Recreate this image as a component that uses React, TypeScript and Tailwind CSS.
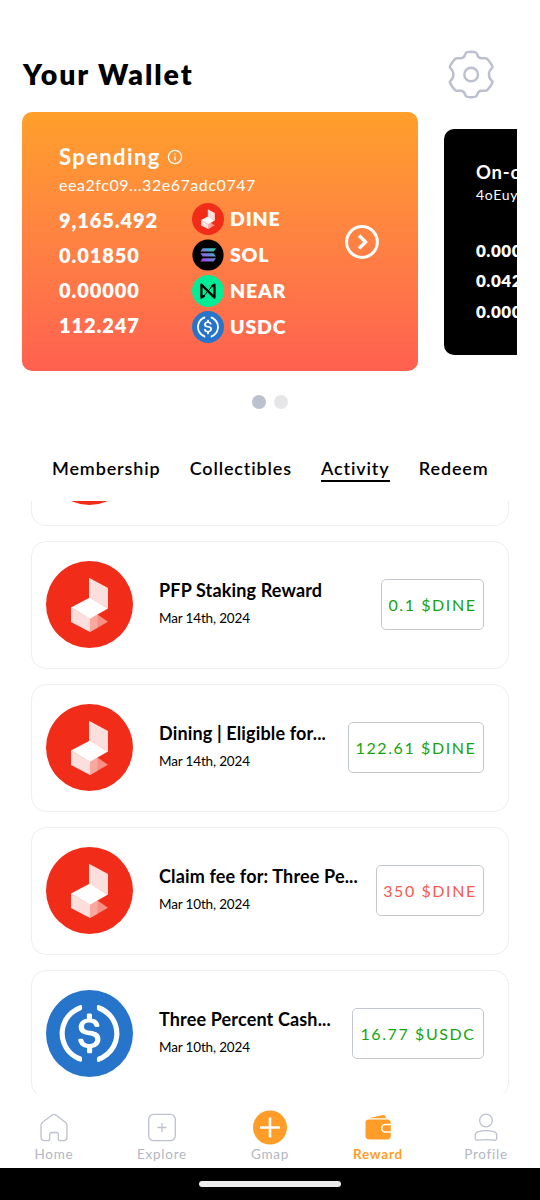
import type { ReactNode } from "react";

const DineIcon = ({ className }: { className: string }) => (
  <svg viewBox="0 0 87 87" className={className}>
    <circle cx="43.5" cy="43.5" r="43.5" fill="#f12d1a" />
    <path d="M43 16.7 62 27V47.5L43 37Z" fill="#fcdfdc" />
    <path d="M44 57.5 51.5 53.5 62 60.8 44 71Z" fill="#f88f85" />
    <path d="M44 57.5 51.5 53.5V66.8L44 71Z" fill="#f9a8a0" />
    <path d="M25 46.5 44 57.5V71L25 61Z" fill="#fcdfdc" />
    <path d="M25 46.5 43.5 36.7 62 47.5 44 57.8Z" fill="#fff" />
  </svg>
);

const UsdcIcon = ({ className }: { className: string }) => (
  <svg viewBox="0 0 32 32" className={className}>
    <circle cx="16" cy="16" r="16" fill="#2775ca" />
    <path
      fill="#fff"
      d="M20.022 18.124c0-2.124-1.28-2.852-3.84-3.156-1.828-.243-2.193-.728-2.193-1.578 0-.85.61-1.396 1.828-1.396 1.097 0 1.707.364 2.011 1.275a.458.458 0 00.427.303h.975a.416.416 0 00.427-.425v-.06a3.04 3.04 0 00-2.743-2.489V9.142c0-.243-.183-.425-.487-.486h-.915c-.243 0-.426.182-.487.486v1.396c-1.829.242-2.986 1.456-2.986 2.974 0 2.002 1.218 2.791 3.778 3.095 1.707.303 2.255.668 2.255 1.639 0 .97-.853 1.638-2.011 1.638-1.585 0-2.133-.667-2.316-1.578-.06-.242-.244-.364-.427-.364h-1.036a.416.416 0 00-.426.425v.06c.243 1.518 1.219 2.61 3.23 2.914v1.457c0 .242.183.425.487.485h.915c.243 0 .426-.182.487-.485V21.34c1.829-.303 3.047-1.578 3.047-3.217z"
    />
    <path
      fill="#fff"
      d="M12.892 24.497c-4.754-1.7-7.192-6.98-5.424-11.653.914-2.55 2.925-4.491 5.424-5.402.244-.121.365-.303.365-.607v-.85c0-.242-.121-.424-.365-.485-.061 0-.183 0-.244.06a10.895 10.895 0 00-7.13 13.717c1.096 3.4 3.717 6.01 7.13 7.102.244.121.488 0 .548-.243.061-.06.061-.122.061-.243v-.85c0-.182-.182-.424-.365-.546zm6.46-18.936c-.244-.122-.488 0-.548.242-.061.061-.061.122-.061.243v.85c0 .243.182.485.365.607 4.754 1.7 7.192 6.98 5.424 11.653-.914 2.55-2.925 4.491-5.424 5.402-.244.121-.365.303-.365.607v.85c0 .242.121.424.365.485.061 0 .183 0 .244-.06a10.895 10.895 0 007.13-13.717c-1.096-3.46-3.778-6.07-7.13-7.162z"
    />
  </svg>
);

const SolIcon = ({ className }: { className: string }) => (
  <svg viewBox="0 0 32 32" className={className}>
    <defs>
      <linearGradient id="sol" x1="23" y1="8" x2="10" y2="23" gradientUnits="userSpaceOnUse">
        <stop stopColor="#19e6ad" />
        <stop offset="0.5" stopColor="#6f86d8" />
        <stop offset="1" stopColor="#a63cf0" />
      </linearGradient>
    </defs>
    <circle cx="16" cy="16" r="15.6" fill="#000" />
    <path
      fill="url(#sol)"
      d="M10.6 9.3H24L21.6 12.6H8.3ZM8.3 14.2H21.6L24 17.6H10.6ZM10.6 19.2H24L21.6 22.5H8.3Z"
    />
  </svg>
);

const NearIcon = ({ className }: { className: string }) => (
  <svg viewBox="0 0 32 32" className={className}>
    <circle cx="16" cy="16" r="16" fill="#00ec97" />
    <path
      d="M12 21 9.4 22.6V9.6L22.5 22.6V9.6L19.9 11.2"
      fill="none"
      stroke="#000"
      strokeWidth="2.2"
      strokeLinejoin="round"
      strokeLinecap="round"
    />
    <path d="M20 11 16.8 15.4M12 21 15.2 16.8" stroke="#000" strokeWidth="1" />
  </svg>
);

const GearIcon = () => (
  <svg viewBox="534 30 138 147" className="h-[49px] w-[46px]">
    <g fill="none" stroke="#bdc1cf" strokeWidth="7.5" strokeLinejoin="round">
      <path d="M590 37Q603.5 33 617 37Q620 38 621.5 43Q624 54 633 55L647 55Q651 55 653 58Q663 69 667 79Q669 82 665 85Q657 92 657 103.5Q657 115 665 122Q669 125 667 128Q663 138 653 149Q651 152 647 152L633 152Q624 153 621.5 164Q620 169 617 170Q603.5 174 590 170Q587 169 585.5 164Q583 153 574 152L560 152Q556 152 554 149Q544 138 540 128Q538 125 542 122Q550 115 550 103.5Q550 92 542 85Q538 82 540 79Q544 69 554 58Q556 55 560 55L574 55Q583 54 585.5 43Q587 38 590 37Z" />
      <circle cx="603.5" cy="103.5" r="20.5" />
    </g>
  </svg>
);

const tokens = [
  { name: "DINE", Icon: DineIcon },
  { name: "SOL", Icon: SolIcon },
  { name: "NEAR", Icon: NearIcon },
  { name: "USDC", Icon: UsdcIcon },
];

const activity = [
  {
    title: "PFP Staking Reward",
    date: "Mar 14th, 2024",
    amount: "0.1 $DINE",
    box: "w-[103px] text-[#15a30b]",
    Icon: DineIcon,
  },
  {
    title: "Dining | Eligible for...",
    date: "Mar 14th, 2024",
    amount: "122.61 $DINE",
    box: "w-[136px] text-[#15a30b]",
    Icon: DineIcon,
  },
  {
    title: "Claim fee for: Three Pe...",
    date: "Mar 10th, 2024",
    amount: "350 $DINE",
    box: "w-[108px] text-[#f9584c]",
    Icon: DineIcon,
  },
  {
    title: "Three Percent Cash...",
    date: "Mar 10th, 2024",
    amount: "16.77 $USDC",
    box: "w-[132px] text-[#15a30b]",
    Icon: UsdcIcon,
  },
];

const NavItem = ({ label, active, children }: { label: string; active?: boolean; children: ReactNode }) => (
  <div className="flex flex-col items-center">
    <svg viewBox="0 0 36 36" className="h-9 w-9" fill="none" stroke="#bdc1cf" strokeWidth="1.3">
      {children}
    </svg>
    <span
      className={
        active
          ? "-mt-px text-[13.5px] leading-[18px] font-bold tracking-[0.75px] text-[#ff9d28]"
          : "-mt-px text-[13.5px] leading-[18px] tracking-[0.75px] text-[#b3b7c2]"
      }>
      {label}
    </span>
  </div>
);

const App = () => {
  return (
    <div className="flex h-[1200px] w-[540px] flex-col overflow-hidden bg-white font-['Lato','Open_Sans',sans-serif] text-black">
      <header className="mt-[50px] flex h-[49px] items-center justify-between pr-[46px] pl-[23px]">
        <h1 className="mb-[2px] text-[28.5px] leading-9 font-extrabold tracking-[1.9px]">Your Wallet</h1>
        <GearIcon />
      </header>

      <section className="mt-[13px] ml-[22px] flex h-[259px] w-[495px] shrink-0 items-center gap-[26px] overflow-hidden">
        <div className="flex h-[259px] w-[396px] shrink-0 items-center rounded-[10px] bg-linear-to-b from-[#ff9f29] to-[#ff6050] pr-[39px] pl-[37px] text-white">
          <div className="flex h-full flex-1 flex-col pt-[31px]">
            <div className="flex items-center gap-[6px]">
              <h2 className="text-[22px] leading-7 font-bold tracking-[1.4px]">Spending</h2>
              <svg viewBox="0 0 16 16" className="h-4 w-4" fill="none" stroke="#fff" strokeWidth="1.3">
                <circle cx="8" cy="8" r="6.6" />
                <path d="M8 7.2V11.5M8 4.3V5.8" />
              </svg>
            </div>
            <p className="mt-[3px] text-base leading-[22px] tracking-[0.55px]">eea2fc09...32e67adc0747</p>
            <div className="mt-[5px] flex">
              <div className="w-[133px] pt-[1.5px] text-[20px] leading-[35px] font-extrabold tracking-[0.9px]">
                <p>9,165.492</p>
                <p>0.01850</p>
                <p>0.00000</p>
                <p>112.247</p>
              </div>
              <div className="text-[19.5px] leading-9 font-extrabold tracking-[0.8px]">
                {tokens.map(({ name, Icon }) => (
                  <div key={name} className="flex h-9 items-center gap-[6px]">
                    <Icon className="h-8 w-8" />
                    <span>{name}</span>
                  </div>
                ))}
              </div>
            </div>
          </div>
          <svg viewBox="0 0 34 34" className="h-[34px] w-[34px]" fill="none" stroke="#fff">
            <circle cx="17" cy="17" r="15.4" strokeWidth="3" />
            <path d="M14 10.5 20.5 17 14 23.5" strokeWidth="3.4" />
          </svg>
        </div>

        <div className="h-[226px] w-[340px] shrink-0 rounded-[10px] bg-black pt-[31px] pl-8 text-white">
          <h2 className="text-[18.5px] leading-6 font-bold tracking-[0.8px]">On-chain</h2>
          <p className="mt-px text-[14px] leading-5 tracking-[0.7px]">4oEuyLk2...</p>
          <div className="mt-[31px] text-[17px] leading-[30.5px] font-extrabold tracking-[0.5px]">
            <p>0.00000</p>
            <p>0.04250</p>
            <p>0.00000</p>
          </div>
        </div>
      </section>

      <div className="mt-[23.5px] flex h-[14px] shrink-0 justify-center gap-2">
        <span className="h-[14px] w-[14px] rounded-full bg-[#bcc1cf]" />
        <span className="h-[14px] w-[14px] rounded-full bg-[#e6e6e8]" />
      </div>

      <nav className="mt-[47px] flex h-[26px] shrink-0 justify-between pr-[51.5px] pl-[52px] text-[18px] leading-6 font-semibold tracking-[0.85px]">
        <span>Membership</span>
        <span>Collectibles</span>
        <span className="border-b-2 border-black">Activity</span>
        <span>Redeem</span>
      </nav>

      <main className="mt-[19px] flex h-[593.5px] shrink-0 flex-col overflow-hidden pr-[31px] pl-[31px]">
        <div className="flex h-[25.5px] shrink-0 flex-col justify-end overflow-hidden rounded-b-[15px] border border-t-0 border-[#eeeeef] pb-[20px] pl-[14px]">
          <DineIcon className="h-[87px] w-[87px] shrink-0" />
        </div>
        {activity.map(({ title, date, amount, box, Icon }) => (
          <div
            key={title}
            className="mt-[14.5px] flex h-[128.5px] shrink-0 items-center rounded-[15px] border border-[#eeeeef] pr-[24px] pl-[14px]">
            <Icon className="h-[87px] w-[87px] shrink-0" />
            <div className="mb-1 ml-[26px] flex-1 whitespace-nowrap">
              <h3 className="text-[18px] leading-6 font-bold tracking-[0.15px]">{title}</h3>
              <p className="mt-[6px] text-[13.5px] leading-5 tracking-[-0.15px]">{date}</p>
            </div>
            <div
              className={
                "flex h-[51px] shrink-0 items-center justify-center rounded-[5px] border border-[#c3c7d1] text-base tracking-[1.6px] whitespace-nowrap " +
                box
              }>
              {amount}
            </div>
          </div>
        ))}
      </main>

      <footer className="grid h-[74px] shrink-0 grid-cols-5 pt-[16px]">
        <NavItem label="Home">
          <path d="M8.6 30.7Q5 30.7 5 27V15.5Q5 13.5 6.6 12.2L15.8 5.2Q18 3.6 20.2 5.2L29.4 12.2Q31 13.5 31 15.5V27Q31 30.7 27.4 30.7H24.2Q22.3 30.7 22.3 28.7V24.5Q22.3 22.5 20.3 22.5H15.7Q13.7 22.5 13.7 24.5V28.7Q13.7 30.7 11.8 30.7Z" />
        </NavItem>
        <NavItem label="Explore">
          <rect x="4.7" y="4.3" width="26.6" height="26.4" rx="5" />
          <path d="M18 13V22M13.5 17.5H22.5" />
        </NavItem>
        <NavItem label="Gmap">
          <circle cx="18" cy="17.5" r="17" fill="#ff9d28" stroke="none" />
          <path d="M18 7.5V27.5M8 17.5H28" stroke="#fff" strokeWidth="2.6" />
        </NavItem>
        <NavItem label="Reward" active>
          <path
            d="M5.5 12.5Q5.5 9.5 9 9.5H27Q30.8 9.5 30.8 13V13.700H25.5A4.5 4.5 0 0 0 25.5 22.700H30.8V25.5Q30.8 29.5 27 29.5H9.5Q5.5 29.5 5.5 25.5Z"
            fill="#ff9d28"
            stroke="none"
          />
          <path d="M8.500 8.300 23 5Q25.200 4.700 26.300 8.300Z" fill="#ff9d28" stroke="none" />
          <path d="M30.800 15.200H25.500A3 3 0 0 0 25.500 21.200H30.800Z" fill="#ff9d28" stroke="none" />
        </NavItem>
        <NavItem label="Profile">
          <circle cx="18" cy="10.5" r="6.3" />
          <path d="M7.3 25Q7.3 22.3 10.3 21.6Q18 19.8 25.7 21.600Q28.700 22.300 28.700 25V28.200Q28.700 30.600 26 30.200Q18 29.200 10 30.200Q7.300 30.600 7.300 28.200Z" />
        </NavItem>
      </footer>

      <div className="flex h-8 shrink-0 items-center justify-center bg-black">
        <span className="h-[6px] w-[142px] rounded-full bg-[#ececec]" />
      </div>
    </div>
  );
};

export default App;
